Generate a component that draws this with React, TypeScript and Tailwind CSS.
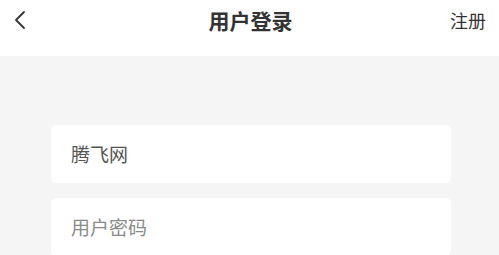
export default function App() {
  return (
    <div
      className="min-h-[255px] w-full bg-[#f5f5f5]"
      style={{ fontFamily: '"Noto Sans CJK SC", "Noto Sans", sans-serif' }}
    >
      {/* Header */}
      <div className="h-[56px] bg-white">
        <div className="grid h-[40px] grid-cols-[1fr_auto_1fr] items-center pl-[13px] pr-[13px]">
          <button className="flex items-center">
            <svg width="16" height="20" viewBox="0 0 16 20" fill="none">
              <path d="M11 2 L3 10 L11 18" stroke="#333" strokeWidth="1.8" strokeLinecap="round" strokeLinejoin="round" />
            </svg>
          </button>
          <h1 className="pl-[2px] text-[21px] font-bold leading-none text-[#333]">用户登录</h1>
          <span className="text-right text-[18px] leading-none text-[#333]">注册</span>
        </div>
      </div>

      {/* Form */}
      <div className="flex flex-col gap-[15px] pl-[51px] pr-[48px] pt-[69px]">
        <div className="flex h-[58px] items-center rounded-[5px] bg-white px-[20px]">
          <span className="text-[19px] text-[#555]">腾飞网</span>
        </div>
        <div className="flex h-[58px] items-center rounded-[5px] bg-white px-[20px]">
          <span className="text-[19px] text-[#8a8a8a]">用户密码</span>
        </div>
      </div>
    </div>
  );
}
